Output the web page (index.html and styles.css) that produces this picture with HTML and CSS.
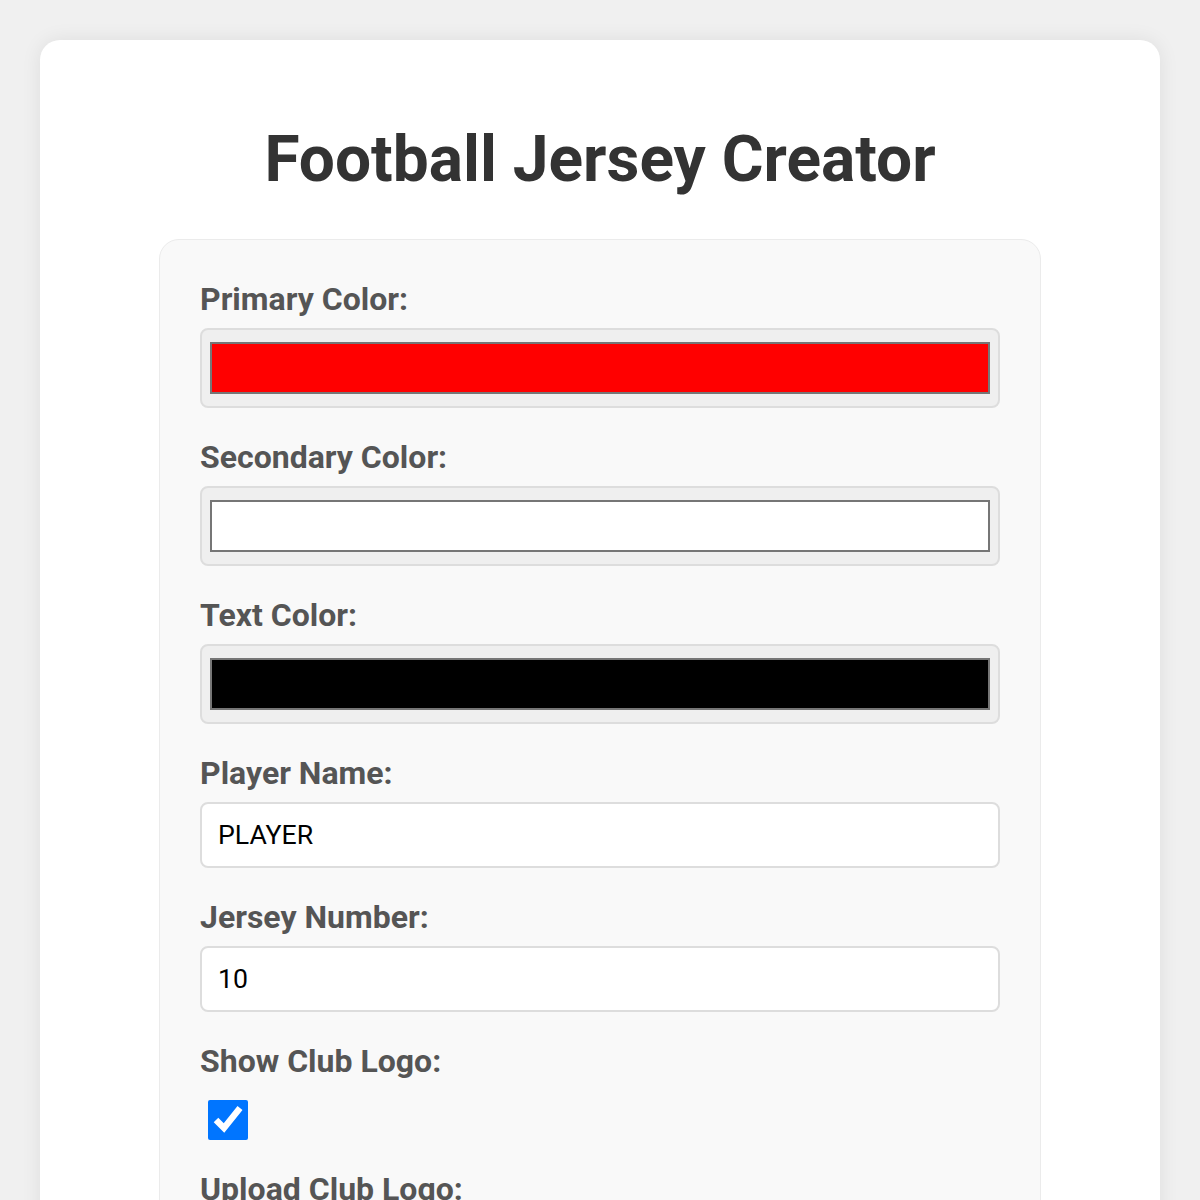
FILE: index.html
```html
<!DOCTYPE html>
<html lang="en">
<head>
    <meta charset="UTF-8">
    <meta name="viewport" content="width=device-width, initial-scale=1.0">
    <title>Football Jersey Creator</title>
    <link rel="stylesheet" href="styles.css">
</head>
<body>
    <div class="container">
        <h1>Football Jersey Creator</h1>
        <div class="controls">
            <div class="form-group">
                <label for="primaryColor">Primary Color:</label>
                <input type="color" id="primaryColor" value="#ff0000">
            </div>
            <div class="form-group">
                <label for="secondaryColor">Secondary Color:</label>
                <input type="color" id="secondaryColor" value="#ffffff">
            </div>
            <div class="form-group">
                <label for="textColor">Text Color:</label>
                <input type="color" id="textColor" value="#000000">
            </div>
            <div class="form-group">
                <label for="playerName">Player Name:</label>
                <input type="text" id="playerName" value="PLAYER">
            </div>
            <div class="form-group">
                <label for="playerNumber">Jersey Number:</label>
                <input type="text" id="playerNumber" value="10">
            </div>
            <div class="form-group">
                <label for="showLogo">Show Club Logo:</label>
                <input type="checkbox" id="showLogo" checked>
            </div>
            <div class="form-group">
                <label for="logoUpload">Upload Club Logo:</label>
                <input type="file" id="logoUpload">
            </div>
        </div>
    </div>
</body>
</html>
```

FILE: styles.css
```css
body {
    font-family: Roboto, "Liberation Sans", Arial, sans-serif;
    background-color: #f0f0f0;
    margin: 0;
    padding: 0;
}

.container {
    margin: 40px;
    padding: 40px;
    background-color: #fff;
    border-radius: 20px;
    box-shadow: 0 0 20px rgba(0, 0, 0, 0.08);
}

h1 {
    text-align: center;
    color: #333;
    font-size: 64px;
    font-weight: 700;
    margin: 42px 0 42px;
    line-height: 75px;
}

.controls {
    width: 800px;
    margin: 0 auto;
    padding: 40px;
    background-color: #f9f9f9;
    border: 1px solid #ebebeb;
    border-radius: 20px;
}

.form-group {
    margin-bottom: 30px;
}

.form-group label {
    display: block;
    margin-bottom: 10px;
    font-size: 32px;
    font-weight: 700;
    color: #555;
    line-height: 38px;
}

input[type="color"] {
    -webkit-appearance: none;
    appearance: none;
    display: block;
    box-sizing: border-box;
    width: 100%;
    height: 80px;
    padding: 0;
    margin: 0;
    border: 2px solid #ddd;
    border-radius: 8px;
    background-color: #efefef;
    cursor: pointer;
}

input[type="color"]::-webkit-color-swatch-wrapper {
    padding: 12px 8px;
}

input[type="color"]::-webkit-color-swatch {
    border: 2px solid #767676;
    border-radius: 0;
}

input[type="text"] {
    display: block;
    box-sizing: border-box;
    width: 100%;
    height: 66px;
    margin: 0;
    padding: 0 16px;
    border: 2px solid #ddd;
    border-radius: 8px;
    background-color: #fff;
    font-family: Roboto, "Liberation Sans", Arial, sans-serif;
    font-size: 26.67px;
    color: #000;
}

input[type="checkbox"] {
    display: block;
    width: 40px;
    height: 40px;
    margin: 20px 6px 11px 8px;
}

input[type="file"] {
    font-size: 26.67px;
}
```
